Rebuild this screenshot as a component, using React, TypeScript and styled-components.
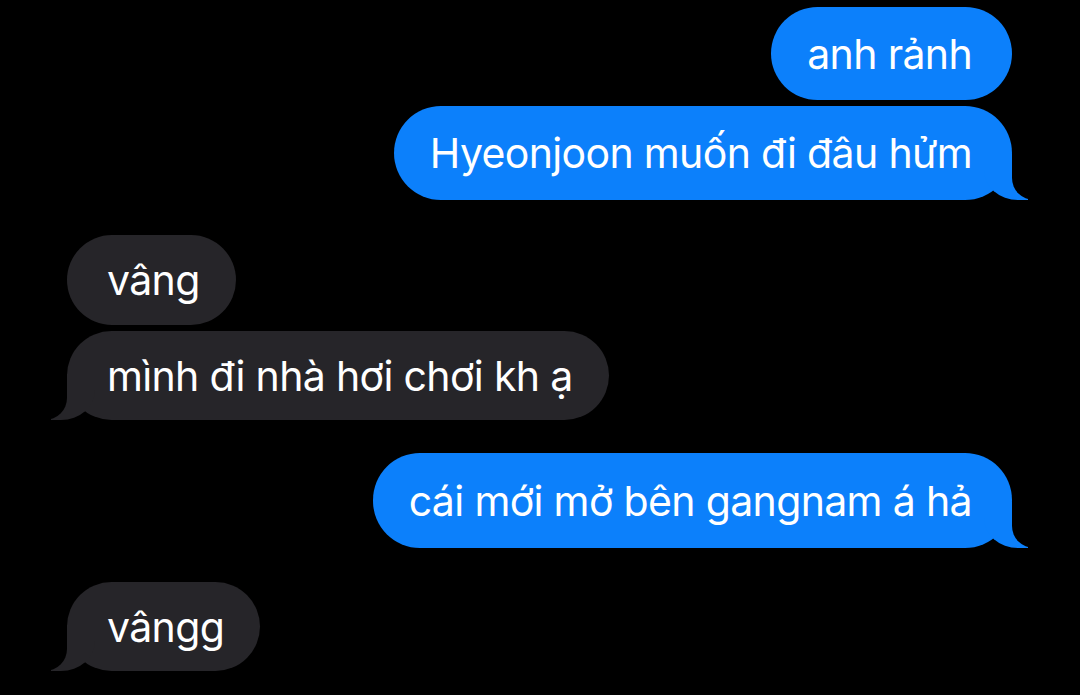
import React from "react";
import styled, { createGlobalStyle, css } from "styled-components";

const Global = createGlobalStyle`
  html, body { margin: 0; padding: 0; background: #000; }
  body { width: 1080px; height: 695px; overflow: hidden; }
`;

const BLUE = "#0c80fb";
const GRAY = "#262529";

const Thread = styled.div`
  display: flex;
  flex-direction: column;
  padding: 7px 68px 0 67px;
  font-family: Inter, "Noto Sans", "Liberation Sans", sans-serif;
`;

const Group = styled.div<{ $side: "sent" | "received"; $gapTop: number }>`
  display: flex;
  flex-direction: column;
  gap: 6px;
  align-items: ${(p) => (p.$side === "sent" ? "flex-end" : "flex-start")};
  margin-top: ${(p) => p.$gapTop}px;
`;

const Bubble = styled.div<{ $side: "sent" | "received"; $tail?: boolean; $h: number }>`
  position: relative;
  box-sizing: border-box;
  height: ${(p) => p.$h}px;
  display: flex;
  align-items: center;
  border-radius: 47px;
  font-size: 41px;
  letter-spacing: -0.65px;
  color: #fff;
  white-space: nowrap;
  background: ${(p) => (p.$side === "sent" ? BLUE : GRAY)};
  padding: ${(p) => (p.$side === "sent" ? "0 40px 0 36px" : "0 36px 0 40px")};

  ${(p) =>
    p.$tail &&
    p.$side === "sent" &&
    css`
      &::before {
        content: "";
        position: absolute;
        bottom: 0;
        right: -16px;
        width: 44px;
        height: 46px;
        background: ${BLUE};
        border-bottom-left-radius: 34px 30px;
      }
      &::after {
        content: "";
        position: absolute;
        bottom: 0;
        right: -52px;
        width: 52px;
        height: 46px;
        background: #000;
        border-bottom-left-radius: 22px;
      }
    `}

  ${(p) =>
    p.$tail &&
    p.$side === "received" &&
    css`
      &::before {
        content: "";
        position: absolute;
        bottom: 0;
        left: -16px;
        width: 44px;
        height: 46px;
        background: ${GRAY};
        border-bottom-right-radius: 34px 30px;
      }
      &::after {
        content: "";
        position: absolute;
        bottom: 0;
        left: -52px;
        width: 52px;
        height: 46px;
        background: #000;
        border-bottom-right-radius: 22px;
      }
    `}
`;

const Text = styled.span`
  position: relative;
  z-index: 1;
`;

type Msg = { text: string; tail?: boolean; h: number };
type G = { side: "sent" | "received"; gapTop: number; msgs: Msg[] };

const groups: G[] = [
  {
    side: "sent",
    gapTop: 0,
    msgs: [
      { text: "anh rảnh", h: 93 },
      { text: "Hyeonjoon muốn đi đâu hửm", tail: true, h: 94 },
    ],
  },
  {
    side: "received",
    gapTop: 35,
    msgs: [
      { text: "vâng", h: 90 },
      { text: "mình đi nhà hơi chơi kh ạ", tail: true, h: 89 },
    ],
  },
  {
    side: "sent",
    gapTop: 33,
    msgs: [{ text: "cái mới mở bên gangnam á hả", tail: true, h: 95 }],
  },
  {
    side: "received",
    gapTop: 34,
    msgs: [{ text: "vângg", tail: true, h: 89 }],
  },
];

export default function App() {
  return (
    <>
      <Global />
      <Thread>
        {groups.map((g, i) => (
          <Group key={i} $side={g.side} $gapTop={g.gapTop}>
            {g.msgs.map((m, j) => (
              <Bubble key={j} $side={g.side} $tail={m.tail} $h={m.h}>
                <Text>{m.text}</Text>
              </Bubble>
            ))}
          </Group>
        ))}
      </Thread>
    </>
  );
}
